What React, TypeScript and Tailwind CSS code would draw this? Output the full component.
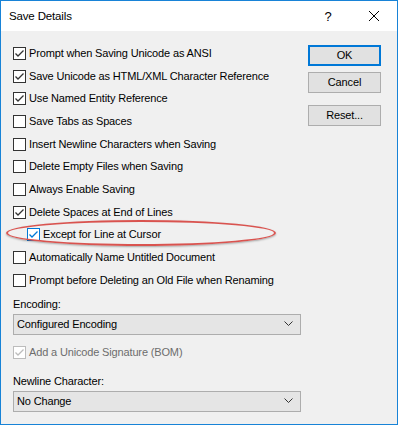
import React from "react";

type Opt = { label: string; checked: boolean; indent?: boolean; focus?: boolean };

const options: Opt[] = [
  { label: "Prompt when Saving Unicode as ANSI", checked: true },
  { label: "Save Unicode as HTML/XML Character Reference", checked: true },
  { label: "Use Named Entity Reference", checked: true },
  { label: "Save Tabs as Spaces", checked: false },
  { label: "Insert Newline Characters when Saving", checked: false },
  { label: "Delete Empty Files when Saving", checked: false },
  { label: "Always Enable Saving", checked: false },
  { label: "Delete Spaces at End of Lines", checked: true },
  { label: "Except for Line at Cursor", checked: true, indent: true, focus: true },
  { label: "Automatically Name Untitled Document", checked: false },
  { label: "Prompt before Deleting an Old File when Renaming", checked: false },
];

function Box({ checked, focus, disabled }: { checked: boolean; focus?: boolean; disabled?: boolean }) {
  const border = disabled ? "border-[#bcbcbc]" : focus ? "border-[#0078d7]" : "border-[#333333]";
  const stroke = disabled ? "#bcbcbc" : focus ? "#0078d7" : "#333333";
  return (
    <span className={`w-[13px] h-[13px] border ${border} bg-white flex items-center justify-center shrink-0`}>
      {checked && (
        <svg width="11" height="11" viewBox="0 0 11 11">
          <path d="M1.5 5.5 L4 8 L9.5 2.5" fill="none" stroke={stroke} strokeWidth="1.3" />
        </svg>
      )}
    </span>
  );
}

function Check({ label, checked, indent, focus }: Opt) {
  return (
    <div className={`h-[22.7px] flex items-center gap-[3px] ${indent ? "pl-[14px]" : ""}`}>
      <Box checked={checked} focus={focus} />
      <span className="whitespace-nowrap">{label}</span>
    </div>
  );
}

function Select({ value }: { value: string }) {
  return (
    <div className="w-[288px] h-[21px] border border-[#adadad] bg-[#e5e5e5] flex items-center justify-between pl-[3px] pr-[7px]">
      <span>{value}</span>
      <svg width="9" height="6" viewBox="0 0 9 6">
        <path d="M0.5 0.5 L4.5 4.5 L8.5 0.5" fill="none" stroke="#333" strokeWidth="1" />
      </svg>
    </div>
  );
}

function Btn({ children, primary }: { children: React.ReactNode; primary?: boolean }) {
  return (
    <div
      className={`w-[73px] h-[21px] bg-[#e1e1e1] flex items-center justify-center ${
        primary ? "border-2 border-[#0078d7]" : "border border-[#adadad]"
      }`}
    >
      {children}
    </div>
  );
}

export default function App() {
  return (
    <div
      className="w-[398px] h-[425px] border border-[#1883d7] flex flex-col text-[11px] leading-[15px] tracking-[-0.15px] text-black overflow-hidden"
      style={{ fontFamily: '"Liberation Sans", Arial, sans-serif' }}
    >
      <div className="h-[30px] bg-white flex items-center justify-between pl-[8px] shrink-0">
        <span className="text-[11.5px]">Save Details</span>
        <div className="flex items-center h-full">
          <span className="w-[46px] text-center text-[13px]">?</span>
          <span className="w-[46px] h-full flex items-center justify-center">
            <svg width="10" height="10" viewBox="0 0 10 10">
              <path d="M0 0 L10 10 M10 0 L0 10" stroke="#000" strokeWidth="1" />
            </svg>
          </span>
        </div>
      </div>
      <div className="flex-1 bg-[#f0f0f0] flex relative">
        <div className="w-[304px] pl-[12px] pt-[11px] flex flex-col shrink-0">
          {options.map((o) => (
            <Check key={o.label} {...o} />
          ))}
          <div className="mt-[5px] h-[16px] flex items-center">Encoding:</div>
          <div className="mt-[1px]">
            <Select value="Configured Encoding" />
          </div>
          <div className="h-[22px] mt-[7px] flex items-center gap-[3px] text-[#6d6d6d]">
            <Box checked disabled />
            <span>Add a Unicode Signature (BOM)</span>
          </div>
          <div className="mt-[10px] h-[16px] flex items-center">Newline Character:</div>
          <div className="mt-[1px]">
            <Select value="No Change" />
          </div>
        </div>
        <div className="ml-[3px] pt-[14px] flex flex-col gap-[6px]">
          <Btn primary>OK</Btn>
          <Btn>Cancel</Btn>
          <div className="mt-[6px]">
            <Btn>Reset...</Btn>
          </div>
        </div>
        <div className="absolute left-[5px] top-[189px] w-[270px] h-[26px] rounded-[50%] border-2 border-[#d9534f] shadow-[0_1px_2px_rgba(0,0,0,0.3)]" />
      </div>
    </div>
  );
}
